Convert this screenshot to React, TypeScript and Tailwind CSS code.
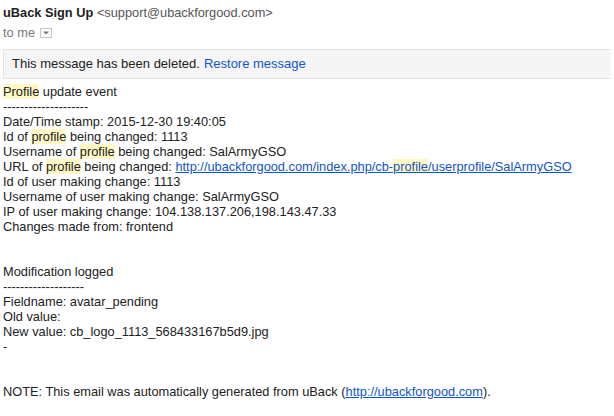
export default function App() {
  const hl = "bg-[#fff8c4]";
  const link = "text-[#1155cc] underline";
  return (
    <div className="min-h-screen bg-white font-['Liberation_Sans',Arial,sans-serif] text-[12.8px] text-[#222] px-[3px] pt-[4px]">
      {/* sender */}
      <div className="leading-[17px]">
        <span className="font-bold text-[#222]">uBack Sign Up</span>{" "}
        <span className="text-[#555]">&lt;support@ubackforgood.com&gt;</span>
      </div>
      <div className="flex items-center gap-[5px] mt-[3px] leading-[17px] text-[#777]">
        <span>to me</span>
        <span className="w-[12px] h-[10px] border border-[#c6c6c6] bg-white flex items-center justify-center">
          <svg width="6" height="4" viewBox="0 0 6 4">
            <path d="M0 0.5 L6 0.5 L3 3.5 Z" fill="#777" />
          </svg>
        </span>
      </div>

      {/* deleted banner */}
      <div className="mt-[8px] h-[30px] flex items-center bg-[#f5f5f5] border-y border-l border-[#e2e2e2] pl-[8px] text-[13px]">
        <span>This message has been deleted.</span>
        <span className="ml-[4px] text-[#1155cc]">Restore message</span>
      </div>

      {/* body */}
      <div className="mt-[5px] leading-[15px]">
        <div><span className={hl}>Profile</span> update event</div>
        <div>--------------------</div>
        <div>Date/Time stamp: 2015-12-30 19:40:05</div>
        <div>Id of <span className={hl}>profile</span> being changed: 1113</div>
        <div>Username of <span className={hl}>profile</span> being changed: SalArmyGSO</div>
        <div className="whitespace-nowrap">
          URL of <span className={hl}>profile</span> being changed:{" "}
          <span className={link}>
            http://ubackforgood.com/index.php/cb-<span className={hl}>profile</span>/userprofile/SalArmyGSO
          </span>
        </div>
        <div>Id of user making change: 1113</div>
        <div>Username of user making change: SalArmyGSO</div>
        <div>IP of user making change: 104.138.137.206,198.143.47.33</div>
        <div>Changes made from: frontend</div>
        <div className="h-[30px]" />
        <div>Modification logged</div>
        <div>-------------------</div>
        <div>Fieldname: avatar_pending</div>
        <div>Old value: </div>
        <div>New value: cb_logo_1113_568433167b5d9.jpg</div>
        <div>-</div>
        <div className="h-[30px]" />
        <div>
          NOTE: This email was automatically generated from uBack (
          <span className={link}>http://ubackforgood.com</span>).
        </div>
      </div>
    </div>
  );
}
